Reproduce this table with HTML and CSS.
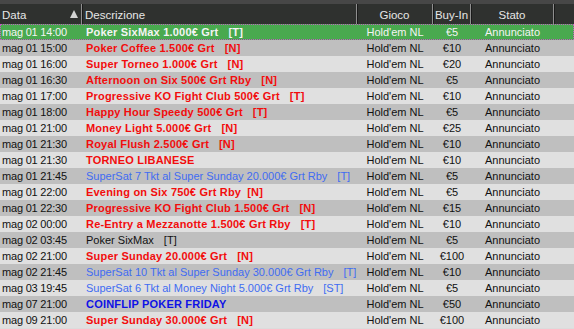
FILE: index.html
```html
<!DOCTYPE html>
<html lang="it">
<head>
    <meta charset="UTF-8">
    <title>Tornei</title>
    <link rel="stylesheet" href="styles.css">
</head>
<body>
    <div class="top-strip"></div>
    <div class="grid-head">
        <div class="hcell col-data">Data <span class="sort-arrow"></span></div>
        <div class="hcell col-desc">Descrizione</div>
        <div class="hcell col-game center">Gioco</div>
        <div class="hcell col-buy center">Buy-In</div>
        <div class="hcell col-state center">Stato</div>
        <div class="hcell col-rest"></div>
    </div>

    <table class="grid">
        <tr class="selected">
            <td class="col-data">mag 01 14:00</td>
            <td class="col-desc"><b>Poker SixMax 1.000€ Grt<span class="tag">[T]</span></b></td>
            <td class="col-game center">Hold'em NL</td>
            <td class="col-buy center">€5</td>
            <td class="col-state center">Annunciato</td>
            <td></td>
        </tr>
        <tr>
            <td class="col-data">mag 01 15:00</td>
            <td class="col-desc red"><b>Poker Coffee 1.500€ Grt<span class="tag">[N]</span></b></td>
            <td class="col-game center">Hold'em NL</td>
            <td class="col-buy center">€10</td>
            <td class="col-state center">Annunciato</td>
            <td></td>
        </tr>
        <tr>
            <td class="col-data">mag 01 16:00</td>
            <td class="col-desc red"><b>Super Torneo 1.000€ Grt<span class="tag">[N]</span></b></td>
            <td class="col-game center">Hold'em NL</td>
            <td class="col-buy center">€20</td>
            <td class="col-state center">Annunciato</td>
            <td></td>
        </tr>
        <tr>
            <td class="col-data">mag 01 16:30</td>
            <td class="col-desc red"><b>Afternoon on Six 500€ Grt Rby<span class="tag">[N]</span></b></td>
            <td class="col-game center">Hold'em NL</td>
            <td class="col-buy center">€5</td>
            <td class="col-state center">Annunciato</td>
            <td></td>
        </tr>
        <tr>
            <td class="col-data">mag 01 17:00</td>
            <td class="col-desc red"><b>Progressive KO Fight Club 500€ Grt<span class="tag">[T]</span></b></td>
            <td class="col-game center">Hold'em NL</td>
            <td class="col-buy center">€10</td>
            <td class="col-state center">Annunciato</td>
            <td></td>
        </tr>
        <tr>
            <td class="col-data">mag 01 18:00</td>
            <td class="col-desc red"><b>Happy Hour Speedy 500€ Grt<span class="tag">[T]</span></b></td>
            <td class="col-game center">Hold'em NL</td>
            <td class="col-buy center">€5</td>
            <td class="col-state center">Annunciato</td>
            <td></td>
        </tr>
        <tr>
            <td class="col-data">mag 01 21:00</td>
            <td class="col-desc red"><b>Money Light 5.000€ Grt<span class="tag">[N]</span></b></td>
            <td class="col-game center">Hold'em NL</td>
            <td class="col-buy center">€25</td>
            <td class="col-state center">Annunciato</td>
            <td></td>
        </tr>
        <tr>
            <td class="col-data">mag 01 21:30</td>
            <td class="col-desc red"><b>Royal Flush 2.500€ Grt<span class="tag">[N]</span></b></td>
            <td class="col-game center">Hold'em NL</td>
            <td class="col-buy center">€10</td>
            <td class="col-state center">Annunciato</td>
            <td></td>
        </tr>
        <tr>
            <td class="col-data">mag 01 21:30</td>
            <td class="col-desc red"><b>TORNEO LIBANESE</b></td>
            <td class="col-game center">Hold'em NL</td>
            <td class="col-buy center">€10</td>
            <td class="col-state center">Annunciato</td>
            <td></td>
        </tr>
        <tr>
            <td class="col-data">mag 01 21:45</td>
            <td class="col-desc sat">SuperSat 7 Tkt al Super Sunday 20.000€ Grt Rby<span class="tag">[T]</span></td>
            <td class="col-game center">Hold'em NL</td>
            <td class="col-buy center">€5</td>
            <td class="col-state center">Annunciato</td>
            <td></td>
        </tr>
        <tr>
            <td class="col-data">mag 01 22:00</td>
            <td class="col-desc red"><b>Evening on Six 750€ Grt Rby<span class="tag short">[N]</span></b></td>
            <td class="col-game center">Hold'em NL</td>
            <td class="col-buy center">€5</td>
            <td class="col-state center">Annunciato</td>
            <td></td>
        </tr>
        <tr>
            <td class="col-data">mag 01 22:30</td>
            <td class="col-desc red"><b>Progressive KO Fight Club 1.500€ Grt<span class="tag">[N]</span></b></td>
            <td class="col-game center">Hold'em NL</td>
            <td class="col-buy center">€15</td>
            <td class="col-state center">Annunciato</td>
            <td></td>
        </tr>
        <tr>
            <td class="col-data">mag 02 00:00</td>
            <td class="col-desc red"><b>Re-Entry a Mezzanotte 1.500€ Grt Rby<span class="tag">[T]</span></b></td>
            <td class="col-game center">Hold'em NL</td>
            <td class="col-buy center">€10</td>
            <td class="col-state center">Annunciato</td>
            <td></td>
        </tr>
        <tr>
            <td class="col-data">mag 02 03:45</td>
            <td class="col-desc">Poker SixMax<span class="tag">[T]</span></td>
            <td class="col-game center">Hold'em NL</td>
            <td class="col-buy center">€5</td>
            <td class="col-state center">Annunciato</td>
            <td></td>
        </tr>
        <tr>
            <td class="col-data">mag 02 21:00</td>
            <td class="col-desc red"><b>Super Sunday 20.000€ Grt<span class="tag">[N]</span></b></td>
            <td class="col-game center">Hold'em NL</td>
            <td class="col-buy center">€100</td>
            <td class="col-state center">Annunciato</td>
            <td></td>
        </tr>
        <tr>
            <td class="col-data">mag 02 21:45</td>
            <td class="col-desc sat">SuperSat 10 Tkt al Super Sunday 30.000€ Grt Rby<span class="tag">[T]</span></td>
            <td class="col-game center">Hold'em NL</td>
            <td class="col-buy center">€10</td>
            <td class="col-state center">Annunciato</td>
            <td></td>
        </tr>
        <tr>
            <td class="col-data">mag 03 19:45</td>
            <td class="col-desc sat">SuperSat 6 Tkt al Money Night 5.000€ Grt Rby<span class="tag">[ST]</span></td>
            <td class="col-game center">Hold'em NL</td>
            <td class="col-buy center">€5</td>
            <td class="col-state center">Annunciato</td>
            <td></td>
        </tr>
        <tr>
            <td class="col-data">mag 07 21:00</td>
            <td class="col-desc special"><b>COINFLIP POKER FRIDAY</b></td>
            <td class="col-game center">Hold'em NL</td>
            <td class="col-buy center">€50</td>
            <td class="col-state center">Annunciato</td>
            <td></td>
        </tr>
        <tr>
            <td class="col-data">mag 09 21:00</td>
            <td class="col-desc red"><b>Super Sunday 30.000€ Grt<span class="tag">[N]</span></b></td>
            <td class="col-game center">Hold'em NL</td>
            <td class="col-buy center">€100</td>
            <td class="col-state center">Annunciato</td>
            <td></td>
        </tr>
    </table>
</body>
</html>
```

FILE: styles.css
```css
* {
    margin: 0;
    padding: 0;
    box-sizing: border-box;
}

body {
    font-family: "Liberation Sans", Arial, sans-serif;
    font-size: 11px;
    background: #dcdcdc;
    color: #111;
    width: 574px;
    overflow: hidden;
}

.top-strip {
    height: 4px;
    background: #474747;
}

/* intestazione */
.grid-head {
    display: flex;
    height: 20px;
    background: #2f312f;
    color: #e6e6e6;
    font-size: 11.5px;
}

.hcell {
    display: flex;
    align-items: center;
    padding-top: 1px;
    border-right: 1px solid #8f8f8f;
    box-shadow: 1px 0 0 #1a1a1a;
}

.hcell.center {
    justify-content: center;
}

.hcell.col-data {
    padding-left: 2px;
    justify-content: space-between;
    padding-right: 3px;
}

.hcell.col-desc {
    padding-left: 3px;
}

.hcell.col-rest {
    flex: 1;
    border-right: none;
    box-shadow: none;
}

.sort-arrow {
    width: 0;
    height: 0;
    border-left: 4px solid transparent;
    border-right: 4px solid transparent;
    border-bottom: 8px solid #d4d4d4;
    margin-top: -1px;
}

.col-data { width: 82px; }
.col-desc { width: 275px; }
.col-game { width: 76px; }
.col-buy { width: 38px; }
.col-state { width: 83px; }

/* righe */
.grid {
    width: 574px;
    border-collapse: collapse;
    table-layout: fixed;
}

.grid tr {
    height: 16px;
    background: #e0e0e0;
}

.grid tr:nth-child(even) {
    background: #bfbfbf;
}

.grid td {
    height: 16px;
    padding: 0;
    white-space: nowrap;
    overflow: hidden;
    line-height: 16px;
}

.grid td.col-data {
    padding-left: 2px;
    letter-spacing: -0.2px;
}

.grid td.col-desc {
    padding-left: 4px;
}

.grid td.center {
    text-align: center;
}

.grid b {
    font-weight: bold;
    letter-spacing: 0.2px;
}

.tag {
    margin-left: 10px;
}

.tag.short {
    margin-left: 6px;
}

.red { color: #f20d0d; }
.sat { color: #3f6cf2; }
.special { color: #0f12e6; }

.grid tr.selected {
    background: #49a94f;
    color: #f4f4f4;
    outline: 1px dotted #c05cc0;
    outline-offset: -1px;
}
```
